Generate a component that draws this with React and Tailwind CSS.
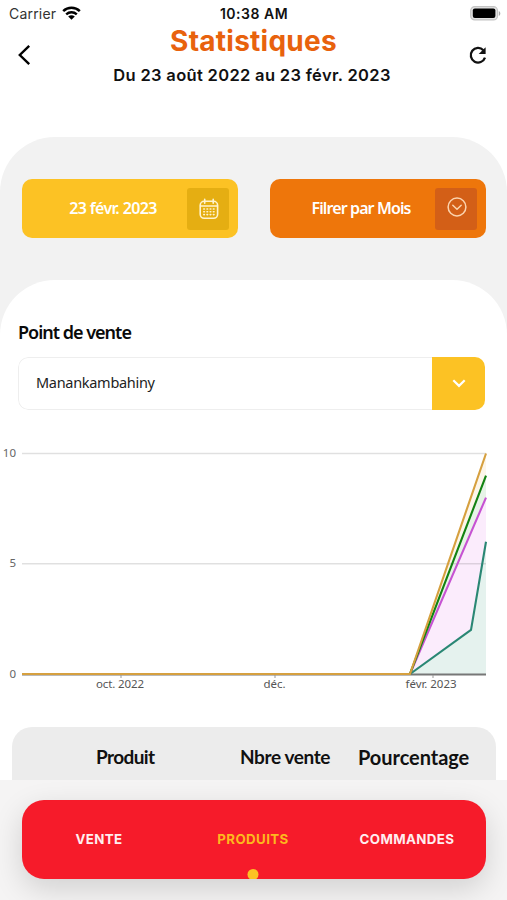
import React, { useState } from 'react';

const TABS = [
  { id: 'vente', label: 'VENTE' },
  { id: 'produits', label: 'PRODUITS' },
  { id: 'commandes', label: 'COMMANDES' },
];

// x position inside the chart (0 - 464) and number of sales
const SERIES = [
  { color: '#d6a03f', fill: '#fdf6ea', points: [[0, 0], [388, 0], [464, 10]] },
  { color: '#128312', fill: '#e7f3e7', points: [[0, 0], [388, 0], [464, 9]] },
  { color: '#c653d2', fill: '#fbecfc', points: [[0, 0], [388, 0], [464, 8]] },
  { color: '#2a8774', fill: '#e5f2ee', points: [[0, 0], [388, 0], [449, 2], [464, 6]] },
];

const toY = (v) => 234 - v * 22.05;
const toPoints = (points) => points.map(([x, v]) => `${x + 22},${toY(v)}`).join(' ');

function StatusBar() {
  return (
    <div className="flex h-7 items-center pl-[9px] pr-[8px] font-['Inter'] text-[14px] leading-none text-[#333]">
      <div className="flex flex-1 items-center gap-[6px]">
        <span className="tracking-[0.2px]">Carrier</span>
        <svg width="19" height="14" viewBox="0 0 19 14" fill="none" className="-mt-[2px]">
          <path d="M1.2 5.2C5.8.7 13.2.7 17.8 5.2" stroke="#000" strokeWidth="2.5" />
          <path d="M4.2 8.3c3-2.8 7.6-2.8 10.6 0" stroke="#000" strokeWidth="2.4" />
          <path d="M9.5 13.8 6.2 10.5c1.8-1.7 4.8-1.7 6.6 0z" fill="#000" />
        </svg>
      </div>
      <span className="text-[14px] font-semibold tracking-[0.5px] text-[#111]">10:38 AM</span>
      <div className="flex flex-1 justify-end">
        <svg width="31" height="15" viewBox="0 0 31 15" className="-mr-[2px] -mt-[2px]">
          <rect x="0.7" y="0.7" width="26.8" height="13.2" rx="4" fill="#e4e4e4" stroke="#c4c4c4" strokeWidth="1.2" />
          <rect x="2.8" y="2.6" width="22.6" height="9.4" rx="2" fill="#000" />
          <path d="M28.8 5v5c2-.8 2-4.2 0-5z" fill="#aaa" />
        </svg>
      </div>
    </div>
  );
}

function Header() {
  return (
    <header className="flex h-[109px] justify-between pl-[17px] pr-[19px] font-['Inter']">
      <button className="mt-[16px] h-[22px] w-[22px]">
        <svg width="14" height="22" viewBox="0 0 14 22" fill="none" stroke="#000" strokeWidth="2.4">
          <path d="M12.2 1.8 2.8 11l9.4 9.2" />
        </svg>
      </button>
      <div className="flex flex-col items-center whitespace-nowrap">
        <h1 className="text-[28px] font-bold leading-[27px] tracking-[0.25px] text-[#e8620d]">Statistiques</h1>
        <p className="mt-[8px] pr-[3px] text-[16.5px] font-semibold leading-6 tracking-[0.33px] text-[#111]">
          Du 23 août 2022 au 23 févr. 2023
        </p>
      </div>
      <button className="mt-[18px] h-[20px] w-[20px]">
        <svg width="20" height="20" viewBox="0 0 20 20" fill="none">
          <path d="M15.4 4.2A7.3 7.3 0 1 0 17 11.6" stroke="#111" strokeWidth="2.3" />
          <path d="M17.6 1.3V8h-6.9z" fill="#111" />
        </svg>
      </button>
    </header>
  );
}

function CalendarIcon() {
  return (
    <svg width="20" height="22" viewBox="0 0 20 22" fill="none" stroke="#fff3cf" strokeWidth="1.6" strokeLinecap="round">
      <rect x="1.2" y="3.3" width="17.4" height="17" rx="4" />
      <path d="M1.6 8h16.8M5.7 1.2v4M14.2 1.2v4" />
      {[11, 13.8, 16.6].map((y) => (
        <path key={y} d={`M4.8 ${y}h.6M8 ${y}h.6M11.2 ${y}h.6M14.4 ${y}h.6`} />
      ))}
    </svg>
  );
}

function CircleDownIcon() {
  return (
    <svg width="20" height="20" viewBox="0 0 20 20" fill="none" stroke="#fbd3ae" strokeWidth="1.5" strokeLinecap="round" strokeLinejoin="round">
      <circle cx="10" cy="10" r="8.9" />
      <path d="m5.8 8.2 4.2 4.1 4.2-4.1" />
    </svg>
  );
}

function Filters() {
  return (
    <div className="flex h-[143px] items-start justify-between pl-[22px] pr-[21px] pt-[42px] font-['Noto_Sans'] text-[16px] font-semibold text-white">
      <button className="flex h-[59px] w-[216px] items-center rounded-[10px] bg-[#fcc224] pr-[9px]">
        <span className="flex-1 pb-[2px] pl-[17px] text-center tracking-[-0.63px]">23 févr. 2023</span>
        <span className="flex size-[42px] items-center justify-center rounded-[3px] bg-[#e5ae12] pl-[2px]">
          <CalendarIcon />
        </span>
      </button>
      <button className="flex h-[59px] w-[216px] items-center rounded-[10px] bg-[#ee760b] pr-[9px]">
        <span className="flex-1 pb-[2px] pl-[17px] text-center tracking-[-0.88px]">Filrer par Mois</span>
        <span className="flex size-[42px] items-center justify-center rounded-[3px] bg-[#d35f17] pb-[3px] pl-[2px]">
          <CircleDownIcon />
        </span>
      </button>
    </div>
  );
}

function PointOfSale() {
  return (
    <div className="pl-[18px] pr-[22px] pt-[39px] font-['Noto_Sans']">
      <label className="block h-[37px] text-[18px] font-semibold leading-[26px] tracking-[-1px] text-[#0a0a0a]">Point de vente</label>
      <div className="mt-[1px] flex h-[53px] overflow-hidden rounded-[10px]">
        <div className="flex flex-1 items-center rounded-l-[10px] border border-r-0 border-[#eeeeee] pb-[2px] pl-[17px] text-[14.5px] text-[#222]">
          <span className="tracking-[-0.3px]">Manankambahiny</span>
        </div>
        <button className="flex w-[53px] items-center justify-center bg-[#fcc224]">
          <svg width="14" height="9" viewBox="0 0 14 9" fill="none" stroke="#fff" strokeWidth="2.2">
            <path d="m1.3 1.3 5.7 5.6 5.7-5.6" />
          </svg>
        </button>
      </div>
    </div>
  );
}

function SalesChart() {
  return (
    <svg width="507" height="260" viewBox="0 0 507 260" className="mt-[30px] block font-['Noto_Sans']">
      {SERIES.map((s) => (
        <polygon key={s.color} points={`${toPoints(s.points)} 486,234`} fill={s.fill} />
      ))}
      {[5, 10].map((v) => (
        <path key={v} d={`M22 ${toY(v)}H486`} stroke="#000" strokeOpacity="0.12" strokeWidth="1.4" />
      ))}
      <path d="M22 234.5H486" stroke="#777" strokeWidth="1.8" />
      <path d="M121 235v3M275 235v3M433 235v3" stroke="#999" />
      {[...SERIES].reverse().map((s) => (
        <polyline key={s.color} points={toPoints(s.points)} fill="none" stroke={s.color} strokeWidth="2.1" />
      ))}
      <g fill="#666" fontSize="11.5" textAnchor="end">
        <text x="16" y="16.5">10</text>
        <text x="16" y="127">5</text>
        <text x="16" y="238">0</text>
      </g>
      <g fill="#555" fontSize="11.5" textAnchor="middle">
        <text x="120" y="248" textLength="48">oct. 2022</text>
        <text x="274.5" y="248" textLength="22">déc.</text>
        <text x="431" y="248" textLength="51">févr. 2023</text>
      </g>
    </svg>
  );
}

function ProductTable() {
  return (
    <div className="ml-[12px] mr-[11px] mt-[27px] flex h-[53px] rounded-t-[20px] bg-[#ececec] pl-[84px] pt-[17px] font-['Lato'] text-[19px] font-bold leading-[26px] text-[#111]">
      <span className="w-[144px] tracking-[-0.6px]">Produit</span>
      <span className="w-[118px] tracking-[-0.4px]">Nbre vente</span>
      <span className="text-[20px] tracking-[-0.05px]">Pourcentage</span>
    </div>
  );
}

function BottomTabs() {
  const [active, setActive] = useState('produits');

  return (
    <div className="h-[120px] overflow-hidden bg-[#f5f4f4] pl-[22px] pr-[21px] pt-[20px]">
      <nav className="grid h-[79px] grid-cols-3 overflow-hidden rounded-[22px] bg-[#f61b2a] pr-[2px] shadow-[0_10px_30px_rgba(0,0,0,0.15)]">
        {TABS.map((tab) => (
          <button
            key={tab.id}
            onClick={() => setActive(tab.id)}
            className={`relative pt-px font-['Inter'] text-[13.3px] font-bold tracking-[0.4px] ${
              active === tab.id ? 'text-[#fdb81e]' : 'text-[#ffeef0]'
            }`}
          >
            {tab.label}
            {active === tab.id && (
              <span className="absolute -bottom-px left-1/2 size-[11px] -translate-x-1/2 rounded-full bg-[#fcc224]" />
            )}
          </button>
        ))}
      </nav>
    </div>
  );
}

export default function App() {
  return (
    <div className="h-[900px] w-[507px] overflow-hidden bg-white">
      <StatusBar />
      <Header />
      <main className="rounded-t-[55px] bg-[#f2f2f2]">
        <Filters />
        <section className="h-[500px] rounded-t-[55px] bg-white">
          <PointOfSale />
          <SalesChart />
          <ProductTable />
        </section>
      </main>
      <BottomTabs />
    </div>
  );
}
